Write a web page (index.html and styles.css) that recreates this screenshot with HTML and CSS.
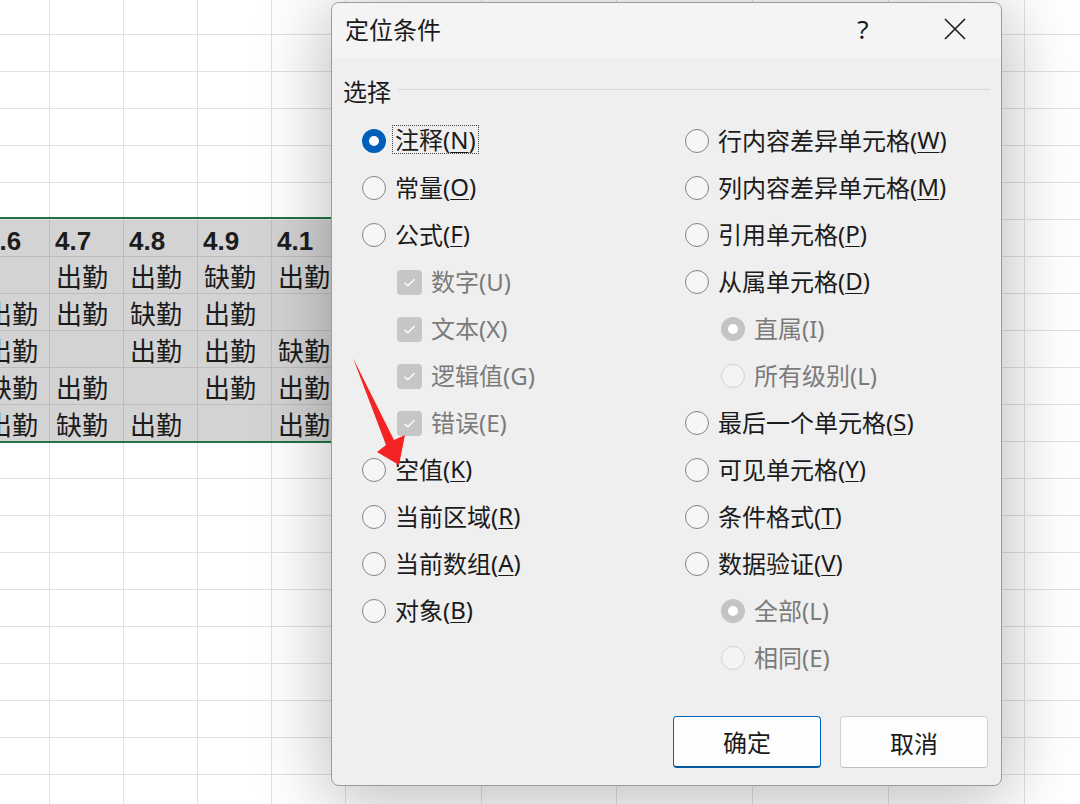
FILE: index.html
```html
<!DOCTYPE html>
<html lang="zh-CN">
  <head>
    <meta charset="UTF-8" />
    <meta name="viewport" content="width=device-width, initial-scale=1.0" />
    <title>定位条件</title>
    <link rel="stylesheet" href="styles.css">
  </head>
  <body>
    <!-- 表格背景 -->
    <div class="sheet" id="sheet"></div>
    <div class="selection"></div>

    <!-- 对话框 -->
    <div class="dialog">
      <div class="titlebar">
        <span class="title">定位条件</span>
        <span class="tb-btn help">?</span>
        <span class="tb-btn close">
          <svg width="22" height="22" viewBox="0 0 22 22"><path d="M1 1L21 21M21 1L1 21" stroke="#1a1a1a" stroke-width="1.6" fill="none"/></svg>
        </span>
      </div>

      <div class="legend">
        <span>选择</span>
        <span class="legend-line"></span>
      </div>

      <div class="options">
        <div class="col">
          <div class="opt"><span class="radio on"></span><span class="focus">注释(<u>N</u>)</span></div>
          <div class="opt"><span class="radio"></span>常量(<u>O</u>)</div>
          <div class="opt"><span class="radio"></span>公式(<u>F</u>)</div>
          <div class="opt sub dis"><span class="check"><svg width="25" height="25" viewBox="0 0 25 25"><path d="M7.5 12.8L10.8 15.8L17.5 9.2" stroke="#fff" stroke-width="1.4" fill="none"/></svg></span>数字(U)</div>
          <div class="opt sub dis"><span class="check"><svg width="25" height="25" viewBox="0 0 25 25"><path d="M7.5 12.8L10.8 15.8L17.5 9.2" stroke="#fff" stroke-width="1.4" fill="none"/></svg></span>文本(X)</div>
          <div class="opt sub dis"><span class="check"><svg width="25" height="25" viewBox="0 0 25 25"><path d="M7.5 12.8L10.8 15.8L17.5 9.2" stroke="#fff" stroke-width="1.4" fill="none"/></svg></span>逻辑值(G)</div>
          <div class="opt sub dis"><span class="check"><svg width="25" height="25" viewBox="0 0 25 25"><path d="M7.5 12.8L10.8 15.8L17.5 9.2" stroke="#fff" stroke-width="1.4" fill="none"/></svg></span>错误(E)</div>
          <div class="opt"><span class="radio"></span>空值(<u>K</u>)</div>
          <div class="opt"><span class="radio"></span>当前区域(<u>R</u>)</div>
          <div class="opt"><span class="radio"></span>当前数组(<u>A</u>)</div>
          <div class="opt"><span class="radio"></span>对象(<u>B</u>)</div>
        </div>
        <div class="col">
          <div class="opt"><span class="radio"></span>行内容差异单元格(<u>W</u>)</div>
          <div class="opt"><span class="radio"></span>列内容差异单元格(<u>M</u>)</div>
          <div class="opt"><span class="radio"></span>引用单元格(<u>P</u>)</div>
          <div class="opt"><span class="radio"></span>从属单元格(<u>D</u>)</div>
          <div class="opt sub2 dis"><span class="radio dis on"></span>直属(I)</div>
          <div class="opt sub2 dis"><span class="radio dis"></span>所有级别(L)</div>
          <div class="opt"><span class="radio"></span>最后一个单元格(<u>S</u>)</div>
          <div class="opt"><span class="radio"></span>可见单元格(<u>Y</u>)</div>
          <div class="opt"><span class="radio"></span>条件格式(<u>T</u>)</div>
          <div class="opt"><span class="radio"></span>数据验证(<u>V</u>)</div>
          <div class="opt sub2 dis"><span class="radio dis on"></span>全部(L)</div>
          <div class="opt sub2 dis"><span class="radio dis"></span>相同(E)</div>
        </div>
      </div>

      <div class="footer">
        <button class="btn primary">确定</button>
        <button class="btn">取消</button>
      </div>
    </div>

    <!-- 红色箭头 -->
    <svg class="arrow" width="1080" height="804" viewBox="0 0 1080 804">
      <polygon points="353,358 394,440 405,435 399,465 377,452 386,445" fill="#f52323"/>
    </svg>

    <script>
      // 列宽（第一列只露出一部分）
      const widths = [70, 74, 74, 74, 74, 136, 135, 136, 136, 136, 136];
      const data = {
        6: ["4.6", "4.7", "4.8", "4.9", "4.1"],
        7: ["", "出勤", "出勤", "缺勤", "出勤"],
        8: ["出勤", "出勤", "缺勤", "出勤", ""],
        9: ["出勤", "", "出勤", "出勤", "缺勤"],
        10: ["缺勤", "出勤", "", "出勤", "出勤"],
        11: ["出勤", "缺勤", "出勤", "", "出勤"],
      };
      const sheet = document.getElementById("sheet");
      sheet.style.gridTemplateColumns = widths.map((w) => w + "px").join(" ");
      for (let r = 0; r < 22; r++) {
        for (let c = 0; c < widths.length; c++) {
          const cell = document.createElement("div");
          cell.className = "cell";
          if (r >= 6 && r <= 11 && c < 6) cell.classList.add("sel");
          if (r === 6) cell.classList.add("head");
          if (data[r] && data[r][c]) cell.textContent = data[r][c];
          sheet.appendChild(cell);
        }
      }
    </script>
  </body>
</html>
```

FILE: styles.css
```css
/* ベース */
body {
  margin: 0;
  width: 1080px;
  height: 804px;
  overflow: hidden;
  position: relative;
  background: #fff;
  font-family: "Segoe UI", "Noto Sans", "Noto Sans CJK SC", sans-serif;
}

/* 表格 */
.sheet {
  display: grid;
  grid-auto-rows: 37px;
  margin-left: -20px;
  margin-top: -2px;
}
.cell {
  box-sizing: border-box;
  border-right: 1px solid #e1e1e1;
  border-bottom: 1px solid #e1e1e1;
  padding: 0 0 0 6px;
  font-family: "Noto Sans CJK SC", sans-serif;
  font-size: 26px;
  line-height: 38px;
  color: #1c1c1c;
  white-space: nowrap;
  overflow: visible;
}
.cell.sel {
  background: #d3d3d3;
  border-color: #bdbdbd;
}
.cell.head {
  font-family: "Liberation Sans", Arial, sans-serif;
  font-weight: bold;
  padding-left: 5px;
  line-height: 42px;
}
.selection {
  position: absolute;
  left: -3px;
  top: 217px;
  width: 380px;
  height: 222px;
  border: 2px solid #217346;
  pointer-events: none;
}

/* 对话框 */
.dialog {
  position: absolute;
  left: 331px;
  top: 2px;
  width: 671px;
  height: 784px;
  box-sizing: border-box;
  border: 1px solid #9c9c9c;
  border-radius: 8px;
  background: #efefef;
  box-shadow: 0 10px 70px 6px rgba(0, 0, 0, 0.26);
  display: flex;
  flex-direction: column;
  color: #1b1b1b;
  font-size: 24px;
}
.titlebar {
  height: 55px;
  display: flex;
  align-items: center;
  background: #f4f4f4;
  border-radius: 8px 8px 0 0;
  padding-left: 13px;
  box-sizing: border-box;
  padding-bottom: 4px;
}
.title {
  flex: 1;
  font-family: "Noto Sans CJK SC", sans-serif;
  font-size: 24px;
}
.tb-btn {
  width: 92px;
  height: 51px;
  display: flex;
  align-items: center;
  justify-content: center;
}
.help {
  font-size: 26px;
  color: #1a1a1a;
}

/* 分组标题 */
.legend {
  display: flex;
  align-items: center;
  height: 32px;
  margin-top: 16px;
  padding-left: 11px;
  padding-right: 11px;
}
.legend-line {
  flex: 1;
  height: 1px;
  background: #d8d8d8;
  margin-left: 7px;
  margin-top: -1px;
}

/* 选项 */
.options {
  display: grid;
  grid-template-columns: 323px 1fr;
  padding-left: 30px;
  margin-top: 10px;
}
.opt {
  height: 47px;
  display: flex;
  align-items: center;
  white-space: nowrap;
}
.opt u {
  text-decoration-thickness: 1px;
  text-underline-offset: 3px;
}
.opt.dis {
  color: #7b7b7b;
}
.opt.sub {
  padding-left: 35px;
}
.opt.sub2 {
  padding-left: 36px;
}
.radio {
  flex: none;
  width: 24px;
  height: 24px;
  box-sizing: border-box;
  border-radius: 50%;
  border: 1.5px solid #838383;
  background: #f6f6f6;
  margin-right: 9px;
  margin-top: 3px;
}
.check {
  flex: none;
  width: 25px;
  height: 25px;
  border-radius: 4px;
  background: #c6c6c6;
  margin-right: 9px;
  margin-top: 3px;
  display: flex;
}
.radio.on {
  border: 7.5px solid #005fb8;
  background: #fff;
}
.radio.dis {
  border: 1px solid #d2d2d2;
  background: #f4f4f4;
}
.radio.dis.on {
  border: 7.5px solid #c4c4c4;
  background: #fff;
}
.focus {
  border: 1px dotted #444;
  padding: 0 2px;
  margin-left: -3px;
  line-height: 27px;
}

/* ボタン */
.footer {
  margin-top: auto;
  display: flex;
  justify-content: flex-end;
  gap: 19px;
  padding: 0 13px 17px 0;
}
.btn {
  width: 148px;
  height: 52px;
  box-sizing: border-box;
  border: 1px solid #d0d0d0;
  border-bottom-color: #bdbdbd;
  border-radius: 4px;
  background: #fdfdfd;
  font-family: "Noto Sans CJK SC", sans-serif;
  font-size: 24px;
  color: #1b1b1b;
  padding: 0;
}
.btn.primary {
  border: 1px solid #0067c0;
  border-bottom: 2px solid #005a9e;
}

/* 矢印 */
.arrow {
  position: absolute;
  left: 0;
  top: 0;
  pointer-events: none;
}
```
